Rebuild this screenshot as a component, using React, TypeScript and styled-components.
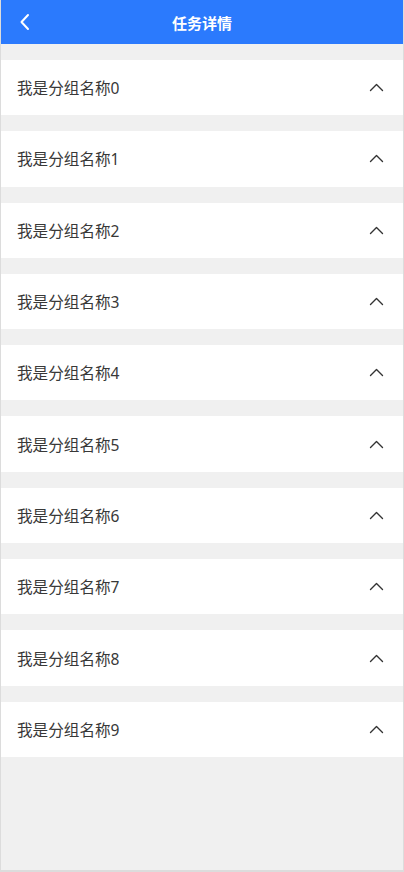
import React from "react";
import styled, { createGlobalStyle } from "styled-components";

const GlobalStyle = createGlobalStyle`
  html, body {
    margin: 0;
    padding: 0;
    background: #ffffff;
  }
  * {
    box-sizing: border-box;
  }
  body {
    font-family: "Noto Sans", "Noto Sans CJK SC", sans-serif;
  }
`;

const SPage = styled.div`
  width: 404px;
  height: 872px;
  background: #f0f0f0;
  border: 1px solid #dcdcdc;
  border-top: none;
  border-bottom-width: 2px;
  display: flex;
  flex-direction: column;
  overflow: hidden;
`;

const SHeader = styled.div`
  height: 44px;
  margin: 0 -1px;
  background: #2b7afd;
  display: flex;
  align-items: center;
  justify-content: center;
  position: relative;
  flex-shrink: 0;
`;

const SBack = styled.div`
  position: absolute;
  left: 19px;
  top: 12px;
  width: 16px;
  height: 20px;
  display: flex;
  align-items: center;
`;

const STitle = styled.h1`
  margin: 0;
  font-size: 15px;
  font-weight: 700;
  color: #ffffff;
  font-family: "Noto Sans CJK SC", sans-serif;
`;

const SList = styled.div`
  display: flex;
  flex-direction: column;
  gap: 16px;
  padding-top: 16px;
`;

const SGroup = styled.div`
  height: 55.3px;
  background: #ffffff;
  display: flex;
  align-items: center;
  justify-content: space-between;
  padding: 0 19px 0 16px;
`;

const SGroupName = styled.span`
  font-size: 15.6px;
  color: #383838;
  font-family: "Noto Sans", "Noto Sans CJK SC", sans-serif;
`;

const groups = Array.from({ length: 10 }, (_, i) => `我是分组名称${i}`);

const App = () => {
  return (
    <>
      <GlobalStyle />
      <SPage>
        <SHeader>
          <SBack>
            <svg width="12" height="18" viewBox="0 0 12 18">
              <path
                d="M9 2 L2.5 9 L9 16"
                fill="none"
                stroke="#ffffff"
                strokeWidth="2"
                strokeLinecap="round"
                strokeLinejoin="round"
              />
            </svg>
          </SBack>
          <STitle>任务详情</STitle>
        </SHeader>
        <SList>
          {groups.map((name, i) => (
            <SGroup key={i}>
              <SGroupName>{name}</SGroupName>
              <svg width="15" height="9" viewBox="0 0 15 9">
                <path
                  d="M1.5 7.5 L7.5 1.5 L13.5 7.5"
                  fill="none"
                  stroke="#333333"
                  strokeWidth="1.4"
                  strokeLinecap="round"
                  strokeLinejoin="round"
                />
              </svg>
            </SGroup>
          ))}
        </SList>
      </SPage>
    </>
  );
};

export default App;
